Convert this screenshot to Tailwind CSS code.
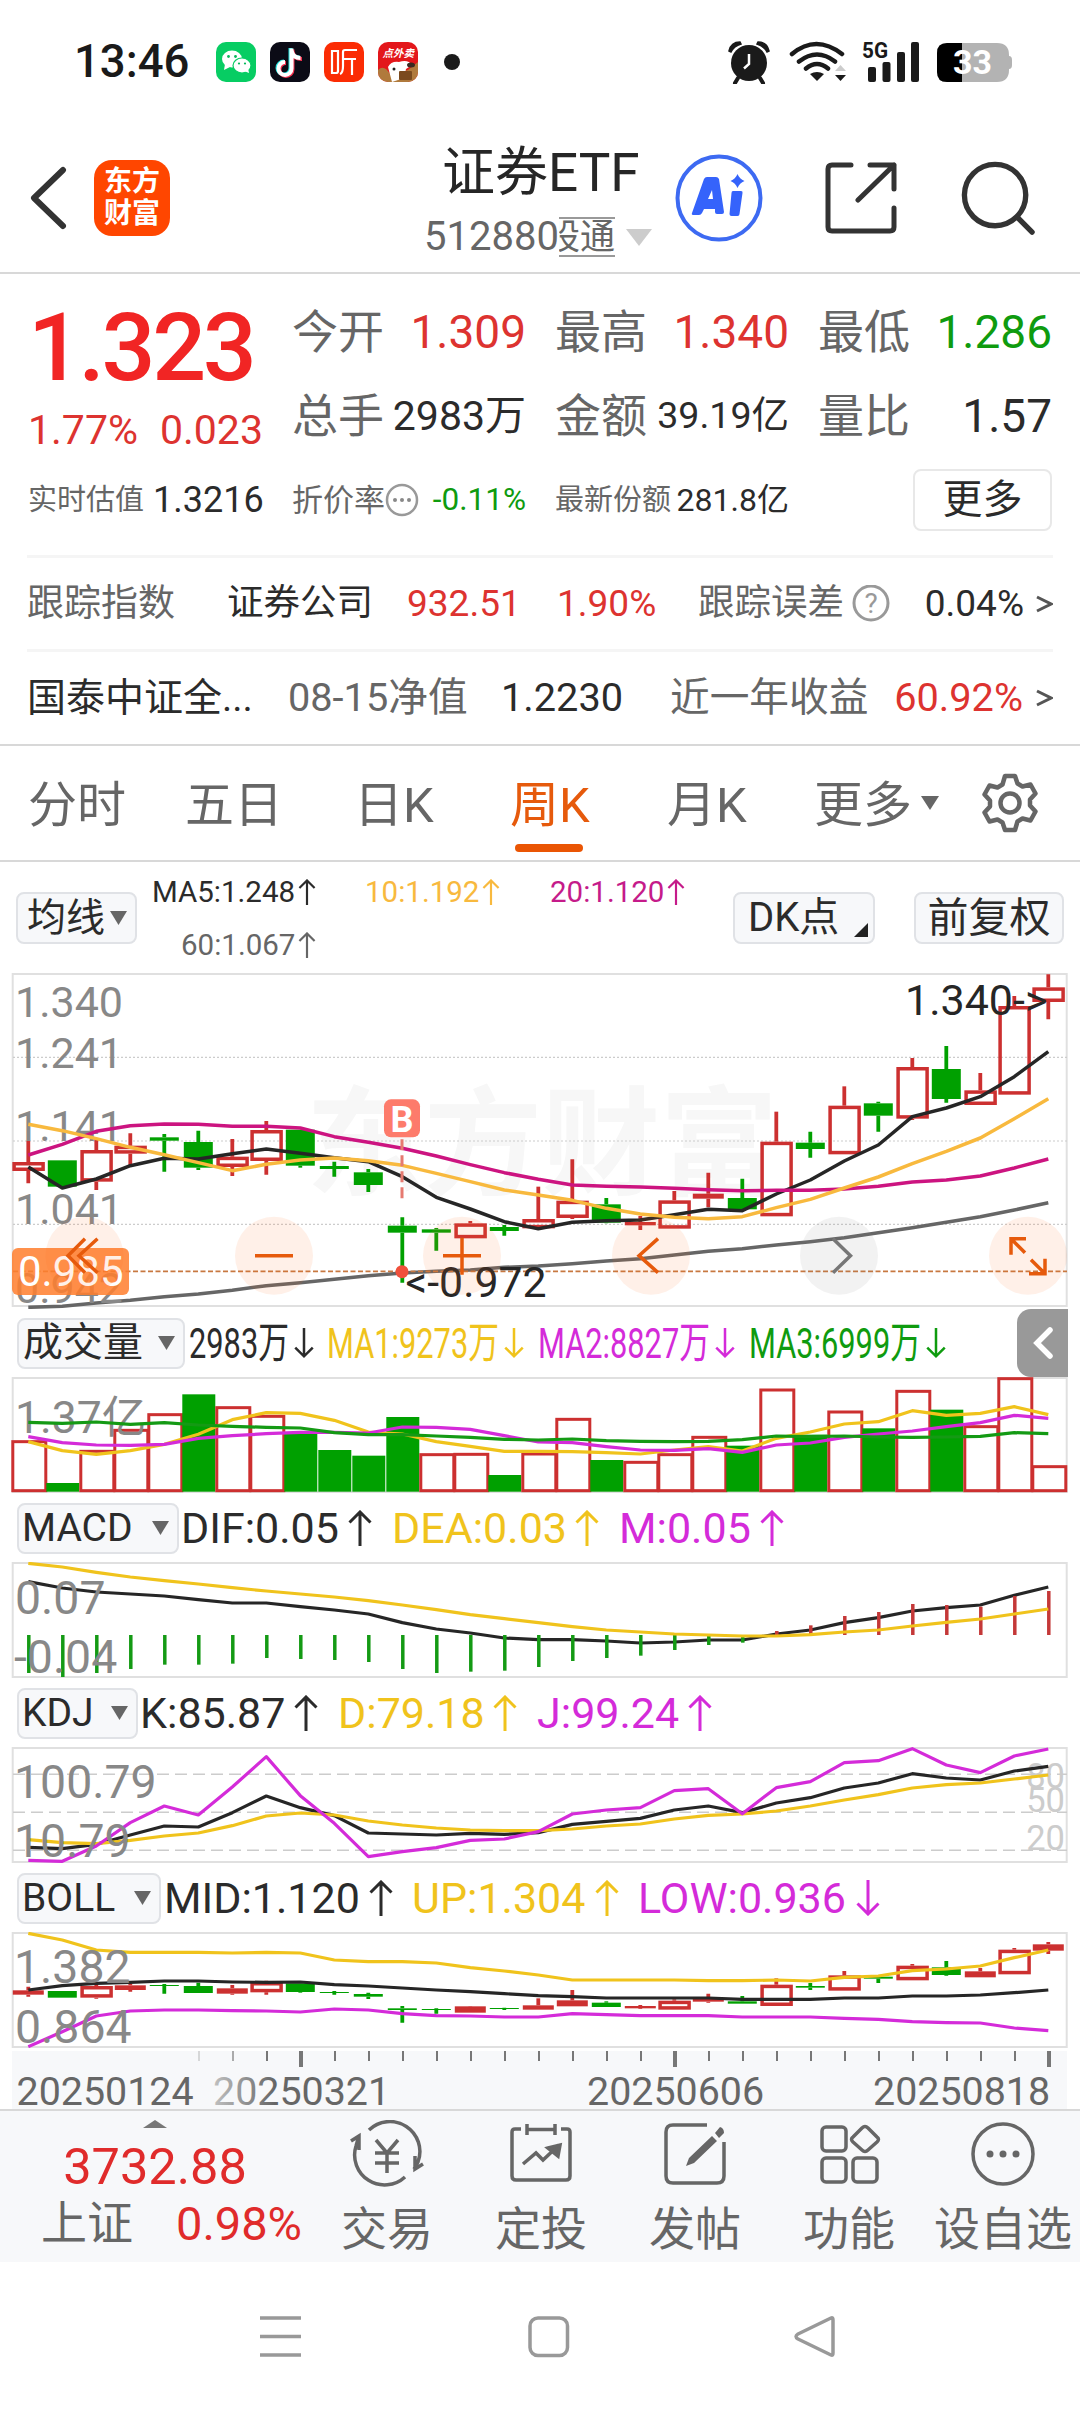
<!DOCTYPE html>
<html lang="zh-CN">
  <head>
    <meta charset="UTF-8" />
    <meta name="viewport" content="width=device-width, initial-scale=1.0" />
    <title>证券ETF 512880</title>
    <script src="https://cdn.jsdelivr.net/npm/@tailwindcss/browser@4"></script>
    <style>
      body {
        font-family: Roboto, 'Noto Sans CJK SC', sans-serif;
      }
    </style>
  </head>
  <body class="w-[1080px] h-[2412px] overflow-hidden bg-white text-[#2b2b2b] leading-none whitespace-nowrap">
    <!-- Shared symbols -->
    <svg class="hidden">
      <symbol id="up" viewBox="0 0 24 36"><path d="M12 36V2M1.5 12.5L12 2l10.500 10.500" fill="none" stroke="currentColor" stroke-width="3" /></symbol>
      <symbol id="down" viewBox="0 0 24 36"><path d="M12 0v34M1.500 23.500L12 34l10.500-10.500" fill="none" stroke="currentColor" stroke-width="3" /></symbol>
    </svg>

    <!-- Status bar -->
    <div class="h-[120px] pt-1 flex items-center">
      <div class="ml-[74px] w-[142px] text-[45.5px] font-medium text-[#1a1a1a]">13:46</div>
      <div class="flex gap-[14px]">
        <svg width="40" height="40" viewBox="0 0 40 40">
          <rect width="40" height="40" rx="10" fill="#07cd63" />
          <ellipse cx="16" cy="17" rx="10" ry="8.500" fill="#fff" />
          <path d="M9 22l-1 6 6-3z" fill="#fff" />
          <ellipse cx="26" cy="23.500" rx="9" ry="7.500" fill="#fff" stroke="#07cd63" stroke-width="1.200" />
          <path d="M28 29l5 2-1-5z" fill="#fff" />
          <g fill="#07b85a"><circle cx="12.500" cy="14.500" r="1.400" /><circle cx="19.500" cy="14.500" r="1.400" /><circle cx="23" cy="21.500" r="1.100" /><circle cx="29" cy="21.500" r="1.100" /></g>
        </svg>
        <svg width="40" height="40" viewBox="0 0 40 40" fill="none" stroke-width="4">
          <rect width="40" height="40" rx="10" fill="#0b0b16" />
          <path d="M20.500 6v20a6.500 6.500 0 1 1-6.500-6.500M20.500 8c1 5 4 7.500 9 7.500" stroke="#25e5e0" />
          <path d="M22.500 7.500v20a6.500 6.500 0 1 1-6.500-6.500M22.500 9.500c1 5 4 7.500 9.500 7.500" stroke="#f5314f" />
          <path d="M21.500 6.500v20a6.500 6.500 0 1 1-6.500-6.500M21.500 8.500c1 5 4 7.500 9 7.500" stroke="#fff" />
        </svg>
        <svg width="40" height="40" viewBox="0 0 40 40" fill="none" stroke="#fff" stroke-width="2.200">
          <rect width="40" height="40" rx="10" fill="#fb2c04" stroke="none" />
          <path d="M8 9h6v20q0 2-2 2H8zM33 8H21q-2 0-2 2v14q0 7-3 8M19 17h13M28 17v16" />
        </svg>
        <svg width="40" height="40" viewBox="0 0 40 40">
          <clipPath id="dog"><rect width="40" height="40" rx="10" /></clipPath>
          <g clip-path="url(#dog)">
            <rect width="40" height="40" fill="#e3171b" />
            <path d="M0 28q6-6 12 4l18-4 10-8v20H0z" fill="#b07a3c" />
            <path d="M10 25q3-6 11-5 9-3 13 3l-6 4-2 9-12 4z" fill="#fff" />
            <ellipse cx="33" cy="23" rx="4" ry="2.500" fill="#3a2a22" />
            <rect x="21" y="29" width="13" height="9" rx="1" fill="#7b4a1e" />
            <circle cx="16" cy="27" r="1.500" fill="#222" />
            <text x="4.500" y="15" font-size="10.500" font-weight="700" fill="#fff" font-style="italic">点外卖</text>
          </g>
        </svg>
      </div>
      <div class="ml-[26px] size-4 rounded-full bg-[#1a1a1a]"></div>
      <svg class="ml-[266px]" width="290" height="44" viewBox="726 40 290 44" fill="#1a1a1a">
        <!-- alarm -->
        <circle cx="749" cy="63" r="18" />
        <path d="M738 78l-3 5M760 78l3 5" stroke="#1a1a1a" stroke-width="4" stroke-linecap="round" />
        <path d="M729 51q2-9 11-9l1 2q-7 2-10 8zM769 51q-2-9-11-9l-1 2q7 2 10 8z" stroke="#1a1a1a" stroke-width="1.500" />
        <path d="M749 54v10l-5 4.500" stroke="#fff" stroke-width="2.500" fill="none" />
        <!-- wifi -->
        <g fill="none" stroke="#1a1a1a" stroke-width="4.500" stroke-linecap="round">
          <path d="M792 54q24-20 50 0M799 61.500q18-14 36 0M806 68.500q11-9 22 0" />
        </g>
        <path d="M817 81l-7-7q7-4 14 0z" />
        <path d="M835 71l5.500-6 5.500 6z" fill="#ccc" />
        <path d="M835 75l5.500 6 5.500-6z" />
        <!-- signal -->
        <rect x="868" y="67" width="8" height="15" rx="2" /><rect x="882.500" y="62" width="8" height="20" rx="2" /><rect x="897" y="52" width="8" height="30" rx="2" /><rect x="911" y="42" width="8" height="40" rx="2" />
        <text x="862" y="58" font-size="22" font-weight="700" textLength="26" lengthAdjust="spacingAndGlyphs">5G</text>
        <!-- battery -->
        <path d="M947 43h50q12 0 12 12v1q3 0 3 4v5q0 4-3 4v1q0 12-12 12h-50q-10 0-10-10V53q0-10 10-10z" fill="#b3b3b3" />
        <path d="M962 43h-15q-10 0-10 10v19q0 10 10 10h15z" fill="#000" />
        <text x="953" y="74" font-size="34" font-weight="700" fill="#fff">33</text>
      </svg>
    </div>

    <!-- Header -->
    <div class="h-[154px] pt-[3px] border-b-2 border-[#d8d8d8] flex items-center">
      <svg class="ml-[27px]" width="42" height="64" viewBox="0 0 42 64"><path d="M36 4L7 32l29 28" fill="none" stroke="#333" stroke-width="6" stroke-linecap="round" stroke-linejoin="round" /></svg>
      <div class="ml-[25px] size-[76px] rounded-[18px] bg-[#ff4600] text-white text-[28px] font-bold flex flex-col items-center justify-center gap-1">
        <span>东方</span><span>财富</span>
      </div>
      <div class="ml-[254px] w-[232px] pt-[9px] flex flex-col items-start">
        <div class="ml-[18px] text-[53px] text-[#262626]">证券ETF</div>
        <div class="mt-[17px] flex items-center text-[40px] text-[#666]">
          <span>512880</span>
          <span class="w-[56px] h-[40px] border-y-2 border-[#999] overflow-hidden flex justify-end items-center text-[35px]"><span>股通</span></span>
          <svg class="ml-[11px]" width="26" height="18"><path d="M0 1h26L13 18z" fill="#ccc" /></svg>
        </div>
      </div>
      <svg class="ml-[19px]" width="88" height="88" viewBox="0 0 88 88">
        <circle cx="44" cy="44" r="41.500" fill="none" stroke="#3d6af2" stroke-width="4" />
        <path d="M17 59l12-34q1-2 3-2h9q2 0 3 2l5 33q0 2-2 2h-5q-2 0-2-2v-3H29l-2 4q-1 2-3 2h-5q-3 0-2-2zM33 45h5l-1-9z" fill="#3563fb" fill-rule="evenodd" />
        <path d="M58 37h8q2 0 1.500 2l-3 21q0 2-2 2h-6q-2 0-2-2l2-21q0-2 1.500-2z" fill="#3563fb" />
        <path d="M62.500 20q2 5 7 7-5 2-7 7-2-5-7-7 5-2 7-7z" fill="#3563fb" />
      </svg>
      <svg class="ml-[62px]" width="72" height="72" viewBox="0 0 72 72" fill="none" stroke="#333" stroke-width="5" stroke-linecap="round" stroke-linejoin="round">
        <path d="M26 3H7Q3 3 3 7v58q0 4 4 4h58q4 0 4-4V46M45 3h24v24M69 3L33 38" />
      </svg>
      <svg class="ml-[64px]" width="74" height="74" viewBox="0 0 76 76" fill="none" stroke="#333" stroke-width="5.500" stroke-linecap="round">
        <circle cx="35" cy="35" r="31.500" /><path d="M58 58l15 15" />
      </svg>
    </div>

    <!-- Quote -->
    <div class="h-[281px] pl-[28px] pr-[28px] flex">
      <div class="w-[264px] flex flex-col">
        <div class="mt-[26px] h-[94px] flex items-center text-[95px] font-medium text-[#f12524] tracking-[-3.4px]">1.323</div>
        <div class="mt-[16px] flex gap-[22px] text-[41px] text-[#dd3330]"><span>1.77%</span><span>0.023</span></div>
        <div class="mt-[31px] flex items-center text-[29px] text-[#666]">实时估值<span class="ml-[9px] text-[36px] text-[#2b2b2b]">1.3216</span></div>
      </div>
      <div class="flex-1 grid grid-cols-[234px_234px_234px] grid-rows-[84px_84px_84px] gap-x-[29px] pt-[16px] text-[46px]">
        <div class="flex items-center justify-between"><span class="text-[#666]">今开</span><span class="text-[#dd3330]">1.309</span></div>
        <div class="flex items-center justify-between"><span class="text-[#666]">最高</span><span class="text-[#dd3330]">1.340</span></div>
        <div class="flex items-center justify-between"><span class="text-[#666]">最低</span><span class="text-[#0f9b0f]">1.286</span></div>
        <div class="flex items-center justify-between"><span class="text-[#666]">总手</span><span class="text-[41px]">2983万</span></div>
        <div class="flex items-center justify-between"><span class="text-[#666]">金额</span><span class="text-[37.5px]">39.19亿</span></div>
        <div class="flex items-center justify-between"><span class="text-[#666]">量比</span><span>1.57</span></div>
        <div class="flex items-center justify-between text-[31px] text-[#666]">
          <span class="flex items-center">折价率
            <svg width="34" height="34" viewBox="0 0 34 34"><circle cx="17" cy="17" r="15" fill="none" stroke="#999" stroke-width="2.500" /><g fill="#888"><circle cx="10" cy="17" r="2" /><circle cx="17" cy="17" r="2" /><circle cx="24" cy="17" r="2" /></g></svg>
          </span>
          <span class="text-[31.5px] text-[#0f9b0f]">-0.11%</span>
        </div>
        <div class="flex items-center justify-between text-[29px] text-[#666]">最新份额<span class="text-[32px] text-[#2b2b2b]">281.8亿</span></div>
        <div class="flex items-center justify-end"><span class="w-[139px] h-[62px] rounded-lg border-2 border-[#e8e8e8] flex items-center justify-center text-[40px]">更多</span></div>
      </div>
    </div>

    <!-- Index rows -->
    <div class="mx-[27px] h-[94px] border-t-3 border-[#f5f5f5] flex items-center text-[37px]">
      <span class="w-[200px] text-[#666]">跟踪指数</span>
      <span class="w-[180px] text-[36.500px]">证券公司</span>
      <span class="w-[150px] text-[#dd3330]">932.51</span>
      <span class="w-[141px] text-[#dd3330]">1.90%</span>
      <span class="text-[36.5px] text-[#666]">跟踪误差</span>
      <svg class="ml-[8px]" width="38" height="38" viewBox="0 0 38 38"><circle cx="19" cy="18" r="17" fill="none" stroke="#999" stroke-width="3" /><text x="19" y="28" font-size="28" text-anchor="middle" fill="#999">?</text></svg>
      <span class="ml-auto">0.04%</span>
      <svg class="ml-[12px]" width="17" height="18" viewBox="0 0 17 18"><path d="M1 2l14 7-14 7" fill="none" stroke="#555" stroke-width="3" /></svg>
    </div>
    <div class="mx-[27px] h-[95px] border-t-3 border-[#f5f5f5] flex items-center text-[39.7px]">
      <span class="w-[261px] text-[39px]">国泰中证全...</span>
      <span class="w-[213px] text-[#666]">08-15净值</span>
      <span class="w-[169px]">1.2230</span>
      <span class="text-[#666]">近一年收益</span>
      <span class="ml-auto text-[#dd3330]">60.92%</span>
      <svg class="ml-[13px]" width="17" height="18" viewBox="0 0 17 18"><path d="M1 2l14 7-14 7" fill="none" stroke="#555" stroke-width="3" /></svg>
    </div>

    <!-- Period tabs -->
    <div class="h-[118px] pt-[4px] border-y-2 border-[#d8d8d8] flex items-center text-[49px] text-[#666]">
      <span class="ml-[28px] w-[157px]">分时</span>
      <span class="w-[169px]">五日</span>
      <span class="w-[156px]">日K</span>
      <span class="relative w-[157px] text-[#e65a0c]">周K<i class="absolute left-[5px] top-[63px] w-[68px] h-[8px] rounded-full bg-[#ea5504]"></i></span>
      <span class="w-[147px]">月K</span>
      <span>更多</span>
      <svg class="ml-[9px] mb-[4px]" width="18" height="14"><path d="M0 0h18L9 14z" fill="#666" /></svg>
      <svg class="ml-[42px] mb-[4px]" width="58" height="60" viewBox="0 0 58 60" fill="none" stroke="#666" stroke-width="4.500" stroke-linejoin="round">
        <path d="M24 3h10l2.500 7.500 5 3 8-2 5 9-5.500 6v6l5.500 6-5 9-8-2-5 3L34 57H24l-2.500-7.500-5-3-8 2-5-9L9 33.500v-6l-5.500-6 5-9 8 2 5-3z" /><circle cx="29" cy="30" r="9.500" />
      </svg>
    </div>

    <!-- Moving average legend -->
    <div class="h-[111px] flex items-start text-[39px]">
      <div class="ml-[16px] mt-[30px] w-[121px] h-[52px] rounded-lg border-2 border-[#e0e2e6] bg-[#f7f8fa] flex items-center pl-[9px]">均线<svg class="ml-[5px]" width="17" height="14"><path d="M0 0h17L8.500 14z" fill="#666" /></svg></div>
      <svg width="596" height="111" viewBox="137 862 596 111" font-size="29.500">
        <text x="152" y="902" fill="#2b2b2b">MA5:1.248</text><use href="#up" x="298" y="879" width="18" height="26" class="text-[#2b2b2b]" />
        <text x="365" y="902" fill="#f8b93e">10:1.192</text><use href="#up" x="482" y="879" width="18" height="26" class="text-[#f8b93e]" />
        <text x="550" y="902" fill="#c51b8a">20:1.120</text><use href="#up" x="667" y="879" width="18" height="26" class="text-[#c51b8a]" />
        <text x="181" y="955" fill="#666">60:1.067</text><use href="#up" x="298" y="932" width="18" height="26" class="text-[#666]" />
      </svg>
      <div class="mt-[30px] w-[142px] h-[52px] rounded-lg border-2 border-[#e0e2e6] bg-[#f7f8fa] flex items-center pl-[13px] text-[40px]">DK点<svg class="ml-auto mr-[5px] mt-[24px]" width="14" height="14"><path d="M14 0v14H0z" fill="#222" /></svg></div>
      <div class="ml-[39px] mt-[30px] w-[150px] h-[52px] rounded-lg border-2 border-[#e0e2e6] bg-[#f7f8fa] flex items-center justify-center text-[41px]">前复权</div>
    </div>

    <!-- K line chart -->
    <svg id="kline" class="block" width="1080" height="336" viewBox="0 0 1080 336"></svg>

    <!-- Volume -->
    <div class="h-[68px] flex items-center text-[40px]">
      <div class="ml-[17px] w-[168px] h-[51px] rounded-lg border-2 border-[#e0e2e6] bg-[#f7f8fa] flex items-center pl-[4px]">成交量<svg class="ml-[15px]" width="17" height="14"><path d="M0 0h17L8.500 14z" fill="#666" /></svg></div>
      <svg width="832" height="68" viewBox="185 1309 832 68" font-size="43">
        <g fill="#2b2b2b" class="text-[#2b2b2b]"><text x="189" y="1358" textLength="100" lengthAdjust="spacingAndGlyphs">2983万</text><use href="#down" x="294" y="1325" width="20" height="36" /></g>
        <g fill="#f0c31c" class="text-[#f0c31c]"><text x="327" y="1358" textLength="172" lengthAdjust="spacingAndGlyphs">MA1:9273万</text><use href="#down" x="504" y="1325" width="20" height="36" /></g>
        <g fill="#d42bd9" class="text-[#d42bd9]"><text x="538" y="1358" textLength="172" lengthAdjust="spacingAndGlyphs">MA2:8827万</text><use href="#down" x="715" y="1325" width="20" height="36" /></g>
        <g fill="#0f9b0f" class="text-[#0f9b0f]"><text x="749" y="1358" textLength="172" lengthAdjust="spacingAndGlyphs">MA3:6999万</text><use href="#down" x="926" y="1325" width="20" height="36" /></g>
      </svg>
      <div class="w-[51px] h-[68px] rounded-l-[14px] bg-[#999] flex items-center justify-center"><svg width="20" height="32" viewBox="0 0 20 32"><path d="M17 3L4 16l13 13" fill="none" stroke="#fff" stroke-width="5.500" stroke-linecap="round" /></svg></div>
    </div>
    <svg id="volume" class="block" width="1080" height="116" viewBox="0 0 1080 116"></svg>

    <!-- MACD -->
    <div class="h-[69px] pt-[1px] flex items-center text-[39px]">
      <div class="ml-[17px] w-[162px] h-[51px] rounded-lg border-2 border-[#e0e2e6] bg-[#f7f8fa] flex items-center pl-[3px] pr-[8px] justify-between">MACD<svg width="17" height="14"><path d="M0 0h17L8.500 14z" fill="#666" /></svg></div>
      <svg width="880" height="69" viewBox="179 1494 880 69" font-size="43">
        <g fill="#2b2b2b" class="text-[#2b2b2b]"><text x="181" y="1543">DIF:0.05</text><use href="#up" x="348" y="1510" width="24" height="36" /></g>
        <g fill="#f0c31c" class="text-[#f0c31c]"><text x="392" y="1543">DEA:0.03</text><use href="#up" x="575" y="1510" width="24" height="36" /></g>
        <g fill="#d42bd9" class="text-[#d42bd9]"><text x="619" y="1543">M:0.05</text><use href="#up" x="760" y="1510" width="24" height="36" /></g>
      </svg>
    </div>
    <svg id="macd" class="block" width="1080" height="116" viewBox="0 0 1080 116"></svg>

    <!-- KDJ -->
    <div class="h-[69px] pt-[1px] flex items-center text-[39px]">
      <div class="ml-[17px] w-[121px] h-[51px] rounded-lg border-2 border-[#e0e2e6] bg-[#f7f8fa] flex items-center pl-[3px] pr-[8px] justify-between">KDJ<svg width="17" height="14"><path d="M0 0h17L8.500 14z" fill="#666" /></svg></div>
      <svg width="900" height="69" viewBox="138 1679 900 69" font-size="43">
        <g fill="#2b2b2b" class="text-[#2b2b2b]"><text x="140" y="1728">K:85.87</text><use href="#up" x="294" y="1695" width="24" height="36" /></g>
        <g fill="#f0c31c" class="text-[#f0c31c]"><text x="338" y="1728">D:79.18</text><use href="#up" x="493" y="1695" width="24" height="36" /></g>
        <g fill="#d42bd9" class="text-[#d42bd9]"><text x="537" y="1728">J:99.24</text><use href="#up" x="688" y="1695" width="24" height="36" /></g>
      </svg>
    </div>
    <svg id="kdj" class="block" width="1080" height="116" viewBox="0 0 1080 116"></svg>

    <!-- BOLL -->
    <div class="h-[69px] pt-[1px] flex items-center text-[39px]">
      <div class="ml-[17px] w-[144px] h-[51px] rounded-lg border-2 border-[#e0e2e6] bg-[#f7f8fa] flex items-center pl-[3px] pr-[8px] justify-between">BOLL<svg width="17" height="14"><path d="M0 0h17L8.500 14z" fill="#666" /></svg></div>
      <svg width="880" height="69" viewBox="161 1864 880 69" font-size="43">
        <g fill="#2b2b2b" class="text-[#2b2b2b]"><text x="164" y="1913">MID:1.120</text><use href="#up" x="369" y="1880" width="24" height="36" /></g>
        <g fill="#f0c31c" class="text-[#f0c31c]"><text x="412" y="1913">UP:1.304</text><use href="#up" x="595" y="1880" width="24" height="36" /></g>
        <g fill="#d42bd9" class="text-[#d42bd9]"><text x="638" y="1913">LOW:0.936</text><use href="#down" x="856" y="1880" width="24" height="36" /></g>
      </svg>
    </div>
    <svg id="boll" class="block" width="1080" height="116" viewBox="0 0 1080 116"></svg>

    <!-- Date axis -->
    <svg id="axis" class="block" width="1080" height="61" viewBox="0 2049 1080 61"></svg>

    <!-- Bottom bar -->
    <div class="h-[153px] border-t-2 border-[#d8d8d8] bg-[#f7f8fa] flex text-[46px] text-[#666]">
      <div class="w-[310px] flex flex-col items-center">
        <svg class="mt-[9px]" width="24" height="8"><path d="M0 8h24L12 0z" fill="#777" /></svg>
        <div class="mt-[14px] text-[50.5px] text-[#e02b2b]">3732.88</div>
        <div class="mt-[7px] ml-[33px] flex gap-[43px] items-center">上证<span class="text-[47px] text-[#e02b2b]">0.98%</span></div>
      </div>
      <div class="w-[154px] flex flex-col items-center">
        <svg class="mt-[9px]" width="76" height="68" viewBox="0 0 76 68" fill="none" stroke="#666" stroke-width="3.500">
          <path d="M20 10a30 30 0 0 1 49 32l-4 7M56 57A30 30 0 0 1 7 26l2-7M2 21l8-5v14M74 44l-8 5V36" />
          <path d="M27 20l11 13 11-13M38 33v20M26 33h24M26 43h24" />
        </svg>
        <span class="mt-[18px]">交易</span>
      </div>
      <div class="w-[154px] flex flex-col items-center">
        <svg class="mt-[9px]" width="68" height="68" viewBox="0 0 68 68" fill="none" stroke="#666" stroke-width="3.500">
          <path d="M14 9H8q-3 0-3 3v44q0 4 4 4h50q4 0 4-4V12q0-3-3-3h-6M20 4v11M48 4v11M20 9.500h28M16 44l13-11 7 7 16-15" />
          <path d="M41 28l12-3-2 11z" fill="#666" />
        </svg>
        <span class="mt-[18px]">定投</span>
      </div>
      <div class="w-[154px] flex flex-col items-center">
        <svg class="mt-[9px]" width="68" height="68" viewBox="0 0 68 68" fill="none" stroke="#666" stroke-width="3.500">
          <path d="M46 5H12q-7 0-7 7v44q0 7 7 7h44q7 0 7-7V22" />
          <path d="M54 13l5-6q4 1 4 6l-5 5zM51 16l5 5-23 22-8 3 3-8z" fill="#666" stroke="none" />
        </svg>
        <span class="mt-[18px]">发帖</span>
      </div>
      <div class="w-[154px] flex flex-col items-center">
        <svg class="mt-[9px]" width="68" height="68" viewBox="0 0 68 68" fill="none" stroke="#666" stroke-width="3.500" stroke-linejoin="round">
          <rect x="7" y="7" width="24" height="24" rx="4" /><rect x="7" y="38" width="24" height="24" rx="4" /><rect x="38" y="38" width="24" height="24" rx="4" />
          <path d="M47 8q3-3 6 0l9 9q3 2 0 5l-9 8q-3 3-6 0l-9-8q-3-3 0-5z" />
        </svg>
        <span class="mt-[18px]">功能</span>
      </div>
      <div class="w-[154px] flex flex-col items-center">
        <svg class="mt-[9px]" width="68" height="68" viewBox="0 0 68 68">
          <circle cx="34" cy="34" r="30" fill="none" stroke="#666" stroke-width="3.500" />
          <g fill="#666"><circle cx="21" cy="34" r="3.500" /><circle cx="34" cy="34" r="3.500" /><circle cx="47" cy="34" r="3.500" /></g>
        </svg>
        <span class="mt-[18px]">设自选</span>
      </div>
    </div>

    <!-- System navigation -->
    <svg class="block" width="1080" height="149" viewBox="0 2263 1080 149" fill="none" stroke="#999" stroke-width="3.500">
      <path d="M260 2319h41M260 2337.500h41M260 2356h41" />
      <rect x="530" y="2319" width="37.500" height="37.500" rx="8" />
      <path d="M831 2319q2-1 2 2v33q0 3-2 2l-33-16q-4-2.500 0-5z" stroke-linejoin="round" />
    </svg>

    <script>
      const RED = '#cc3030', GREEN = '#00a000', DARK = '#262626', YELLOW = '#f0c31c', PURPLE = '#d42bd9', GRAY = '#888';
      const X = i => 28.3 + 34 * i;

      // All y values are stored at 3x; each panel subtracts its own top.
      const scale = top => v => +((v - top) / 3 + 1).toFixed(2);

      const frame = h => `<rect x="12.700" y="1" width="1054" height="${h}" fill="none" stroke="#e0e0e0" stroke-width="2"/>`;
      const line = (y, data, color, w = 3.5) =>
        `<polyline fill="none" stroke="${color}" stroke-width="${w}" stroke-linejoin="round" points="${data.map((v, i) => X(i) + ',' + y(v)).join(' ')}"/>`;
      const label = (x, y, t, size = 46.4, color = GRAY, extra = '') =>
        `<text x="${x}" y="${y}" font-size="${size}" fill="${color}" ${extra}>${t}</text>`;

      function candles(y, rows) {
        return rows.map(([c, hi, top, bot, lo], i) => {
          const x = X(i), a = y(top), b = y(bot), color = c === 'r' ? RED : GREEN;
          const wick = `<path d="M${x} ${y(hi)}V${a}M${x} ${b}V${y(lo)}" stroke="${color}" stroke-width="3.800"/>`;
          if (c === 'g' || b - a < 7) {
            const w = c === 'g' ? 29 : 31;
            return wick + `<rect x="${x - w / 2}" y="${a}" width="${w}" height="${b - a}" fill="${color}"/>`;
          }
          return wick + `<rect x="${x - 14.2}" y="${a + 1.75}" width="29" height="${b - a - 3.5}" fill="none" stroke="${color}" stroke-width="3.500"/>`;
        }).join('');
      }

      // K line
      let y = scale(342);
      document.getElementById('kline').innerHTML =
        `<text x="306" y="${y(978)}" font-size="118" font-weight="700" fill="#f7f7f7">东方财富</text>` +
        frame(332) +
        [592, 843, 1093].map(v => `<path d="M13 ${y(v)}H1067" stroke="#ccc" stroke-width="1.200" stroke-dasharray="2 2"/>`).join('') +
        candles(y, [
          ['r', 843, 906, 933, 970], ['g', 901, 901, 980, 980], ['r', 837, 870, 965, 990], ['r', 820, 857, 881, 915],
          ['g', 822, 832, 842, 935], ['g', 812, 846, 923, 930], ['r', 837, 890, 921, 948], ['r', 783, 810, 903, 944],
          ['g', 809, 809, 917, 923], ['g', 905, 918, 927, 950], ['g', 927, 937, 975, 996], ['g', 1072, 1097, 1118, 1268],
          ['g', 1104, 1108, 1118, 1172], ['r', 1083, 1090, 1135, 1135], ['g', 1095, 1101, 1113, 1127], ['r', 980, 1077, 1105, 1105],
          ['r', 898, 1022, 1074, 1077], ['g', 1014, 1033, 1088, 1090], ['r', 1068, 1086, 1096, 1110], ['r', 993, 1021, 1106, 1106],
          ['r', 938, 1001, 1016, 1042], ['g', 956, 1014, 1048, 1050], ['r', 755, 845, 1069, 1069], ['g', 815, 848, 867, 893],
          ['r', 679, 737, 883, 883], ['g', 725, 730, 767, 815], ['r', 594, 621, 776, 780], ['g', 558, 627, 717, 728],
          ['r', 639, 691, 735, 735], ['r', 408, 438, 704, 704], ['r', 343, 382, 426, 478],
        ]) +
        label(15, y(470), '1.340', 43) + label(15, y(624), '1.241', 43) + label(15, y(842), '1.141', 43) + label(15, y(1092), '1.041', 43) +
        line(y, [921, 984, 957, 917, 895, 897, 881, 867, 880, 893, 905, 950, 1012, 1047, 1085, 1106, 1087, 1082, 1080, 1064, 1048, 1052, 1002, 960, 903, 855, 770, 744, 710, 650, 575], DARK) +
        line(y, [885, 853, 814, 797, 792, 793, 799, 799, 804, 830, 847, 865, 888, 914, 938, 958, 975, 979, 981, 985, 989, 992, 991, 991, 987, 979, 966, 960, 948, 924, 897], '#cc1480') +
        line(y, [793, 812, 836, 862, 884, 908, 932, 913, 900, 894, 902, 916, 940, 965, 990, 1005, 1021, 1045, 1062, 1072, 1076, 1070, 1043, 1018, 984, 951, 911, 874, 834, 776, 716], '#f8b93e') +
        line(y, [1342, 1339, 1329, 1321, 1310, 1302, 1291, 1277, 1268, 1258, 1247, 1239, 1234, 1230, 1222, 1218, 1211, 1203, 1196, 1185, 1174, 1166, 1155, 1145, 1133, 1118, 1103, 1087, 1070, 1050, 1028], '#666') +
        label(15, y(1330), '0.942', 43) +
        `<path d="M13 ${y(1234)}H1067" stroke="#c87840" stroke-width="1.600" stroke-dasharray="5 2.500"/>` +
        `<rect x="12" y="${y(1164)}" width="117" height="47" rx="6" fill="#ff7f2e" fill-opacity=".86"/>` +
        label(18, y(1278), '0.985', 42, '#fff') +
        // buy marker
        `<path d="M402 ${y(838)}V${y(1030)}" stroke="#e67a70" stroke-width="3" stroke-dasharray="11 5"/>` +
        `<rect x="384" y="${y(718)}" width="36" height="38" rx="7" fill="#fd7b6b"/>` +
        label(402, y(816), 'B', 36, '#fff', 'font-weight="700" text-anchor="middle"') +
        `<circle cx="402" cy="${y(1235)}" r="6.500" fill="#f0503c"/>` +
        label(405.5, y(1312), '&lt;-0.972', 42.8, DARK) + label(905, y(464), '1.340->', 43, DARK) +
        // floating controls
        [84.5, 274, 462, 651, 839, 1028].map(cx => `<circle cx="${cx}" cy="${y(1187)}" r="39" fill="${cx === 839 ? '#808080' : '#ff6a1a'}" fill-opacity=".1"/>`).join('') +
        `<g transform="translate(0 ${y(1187)})" fill="none" stroke="#e65a0c" stroke-width="3.500">
          <path d="M85 -17L68 0l17 17M97.500 -17L79 0l18.500 17M255 0h38M443 0h38M462 -18v37M658 -17L639 0l19 17"/>
          <path d="M833 -17l17.500 17L833 17" stroke="#777"/>
          <path d="M1011 -1V-17h15M1011 -17l14 14M1045 3V18h-16M1045 18l-14-14"/>
        </g>`;

      // Volume
      y = scale(204);
      const bars = [
        ['r', 395], ['g', 519], ['r', 424], ['r', 361], ['r', 314], ['g', 253], ['r', 293], ['r', 319], ['g', 371], ['g', 420], ['g', 437],
        ['g', 321], ['r', 434], ['r', 433], ['g', 495], ['r', 432], ['r', 328], ['g', 450], ['r', 457], ['r', 434], ['r', 382], ['g', 407],
        ['r', 240], ['g', 374], ['r', 306], ['g', 355], ['r', 244], ['g', 299], ['r', 350], ['r', 206], ['r', 470],
      ];
      document.getElementById('volume').innerHTML = frame(114) +
        bars.map(([c, v], i) => c === 'r'
          ? `<rect x="${X(i) - 15.5}" y="${y(v)}" width="33" height="${y(542) - y(v)}" fill="none" stroke="${RED}" stroke-width="3"/>`
          : `<rect x="${X(i) - 16}" y="${y(v)}" width="33" height="${y(545) - y(v)}" fill="${GREEN}"/>`).join('') +
        label(15, y(370), '1.37亿', 44.5) +
        line(y, [395, 422, 433, 422, 403, 373, 329, 308, 310, 331, 366, 372, 395, 409, 424, 424, 425, 428, 432, 420, 410, 423, 385, 366, 342, 335, 302, 316, 310, 290, 314], YELLOW, 3.2) +
        line(y, [380, 398, 405, 406, 403, 385, 377, 371, 367, 367, 369, 351, 352, 358, 377, 396, 398, 410, 420, 421, 416, 427, 405, 399, 382, 372, 363, 350, 338, 316, 325], PURPLE, 3.2) +
        line(y, [337, 340, 336, 343, 338, 345, 349, 352, 354, 368, 374, 374, 378, 382, 388, 390, 387, 392, 394, 395, 394, 389, 378, 380, 378, 381, 382, 381, 379, 368, 371], '#149a14', 3.2);

      // MACD
      y = scale(759);
      document.getElementById('macd').innerHTML = frame(114) +
        line(y, [815, 834, 846, 852, 858, 869, 879, 879, 890, 900, 912, 938, 957, 969, 984, 989, 989, 993, 999, 996, 990, 990, 972, 960, 938, 923, 903, 893, 885, 856, 831], DARK, 3.2) +
        [1089, 1101, 1089, 1077, 1064, 1064, 1061, 1044, 1047, 1050, 1056, 1077, 1089, 1085, 1082, 1071, 1053, 1044, 1037, 1020, 1005, 998, 963, 946, 918, 906, 882, 885, 890, 858, 843]
          .map((v, i) => `<path d="M${X(i) + 0.5} ${y(975)}V${y(v)}" stroke="${i < 22 ? '#149a14' : '#c43838'}" stroke-width="3.500"/>`).join('') +
        line(y, [760, 771, 787, 801, 812, 822, 833, 843, 852, 861, 872, 885, 899, 914, 926, 938, 950, 960, 966, 972, 975, 978, 978, 974, 966, 960, 948, 937, 927, 912, 897], YELLOW, 3.2) +
        label(15, y(911), '0.07') + label(14, y(1088), '-0.04');

      // KDJ
      y = scale(174);
      document.getElementById('kdj').innerHTML = frame(114) +
        [253, 367, 481].map(v => `<path d="M13 ${y(v)}H1067" stroke="#ccc" stroke-width="1.500" stroke-dasharray="12 6"/>`).join('') +
        label(1065, y(294), '80', 34.5, '#ccc', 'text-anchor="end"') + label(1065, y(365), '50', 34.5, '#ccc', 'text-anchor="end"') + label(1065, y(480), '20', 34.5, '#ccc', 'text-anchor="end"') +
        line(y, [472, 476, 463, 435, 408, 411, 368, 318, 353, 377, 429, 432, 435, 430, 433, 428, 403, 394, 385, 360, 348, 368, 339, 323, 294, 279, 251, 264, 270, 243, 229], DARK, 3.2) +
        line(y, [449, 458, 461, 451, 438, 429, 407, 378, 369, 375, 393, 405, 414, 420, 422, 422, 417, 408, 402, 387, 376, 372, 363, 348, 330, 314, 294, 284, 279, 267, 255], YELLOW, 3.2) +
        line(y, [511, 514, 468, 398, 348, 375, 291, 200, 317, 400, 500, 485, 473, 451, 447, 425, 372, 360, 353, 302, 296, 371, 293, 275, 218, 212, 176, 225, 248, 198, 177], PURPLE, 3.2) +
        label(14, y(325), '100.79') + label(14, y(501), '10.79');

      // BOLL
      y = scale(729);
      document.getElementById('boll').innerHTML = frame(114) +
        candles(y, [
          ['r', 890, 901, 914, 920], ['g', 903, 903, 923, 923], ['r', 880, 888, 923, 926], ['r', 880, 886, 900, 905],
          ['g', 882, 885, 888, 911], ['g', 878, 888, 909, 909], ['r', 885, 895, 911, 914], ['r', 872, 876, 907, 914],
          ['g', 880, 880, 906, 908], ['g', 903, 906, 909, 914], ['g', 908, 912, 920, 927], ['g', 948, 955, 960, 998],
          ['g', 955, 957, 960, 971], ['r', 948, 949, 968, 968], ['g', 953, 954, 957, 960], ['r', 925, 946, 959, 959],
          ['r', 900, 931, 949, 949], ['g', 934, 938, 951, 951], ['r', 945, 948, 955, 957], ['r', 928, 932, 959, 959],
          ['r', 911, 926, 935, 938], ['g', 918, 934, 941, 941], ['r', 865, 884, 948, 948], ['g', 879, 888, 893, 900],
          ['r', 843, 856, 902, 902], ['g', 856, 860, 866, 879], ['r', 822, 827, 871, 871], ['g', 813, 832, 855, 857],
          ['r', 834, 844, 862, 862], ['r', 774, 779, 853, 853], ['r', 756, 763, 782, 792],
        ]) +
        line(y, [730, 750, 780, 787, 787, 787, 789, 787, 789, 810, 815, 815, 819, 833, 843, 855, 870, 870, 870, 870, 872, 872, 870, 873, 862, 858, 842, 837, 828, 803, 780], YELLOW, 3.2) +
        line(y, [900, 887, 880, 877, 873, 873, 876, 877, 876, 884, 888, 894, 900, 905, 911, 917, 920, 924, 924, 924, 924, 928, 928, 928, 924, 924, 918, 918, 915, 908, 900], DARK, 3.2) +
        line(y, [1070, 1025, 978, 963, 960, 960, 962, 963, 966, 957, 960, 971, 977, 978, 981, 981, 971, 974, 977, 977, 977, 981, 981, 981, 985, 988, 995, 998, 999, 1014, 1022], PURPLE, 3.2) +
        label(14, y(880), '1.382') + label(15, y(1058), '0.864');

      // Date axis
      let ticks = '';
      for (let i = 5; i <= 30; i++) {
        const major = i === 8 || i === 19 || i === 30;
        ticks += `<path d="M${X(i) + 0.7} 2052v${major ? 16 : 10}" stroke="#777" stroke-width="${major ? 4 : 2}" opacity="${i === 5 ? 0.25 : i === 6 ? 0.6 : 1}"/>`;
      }
      document.getElementById('axis').innerHTML =
        `<linearGradient id="fade" gradientUnits="userSpaceOnUse" x1="205" x2="275"><stop stop-color="#ccc"/><stop offset="1" stop-color="#666"/></linearGradient>
        <rect x="12" y="2052" width="1055" height="58" fill="#f7f8fa"/>` + ticks +
        label(16.5, 2106, '20250124', 39.4, '#666') + label(213, 2106, '20250321', 39.4, 'url(#fade)') +
        label(587, 2106, '20250606', 39.4, '#666') + label(873, 2106, '20250818', 39.4, '#666');
    </script>
  </body>
</html>
